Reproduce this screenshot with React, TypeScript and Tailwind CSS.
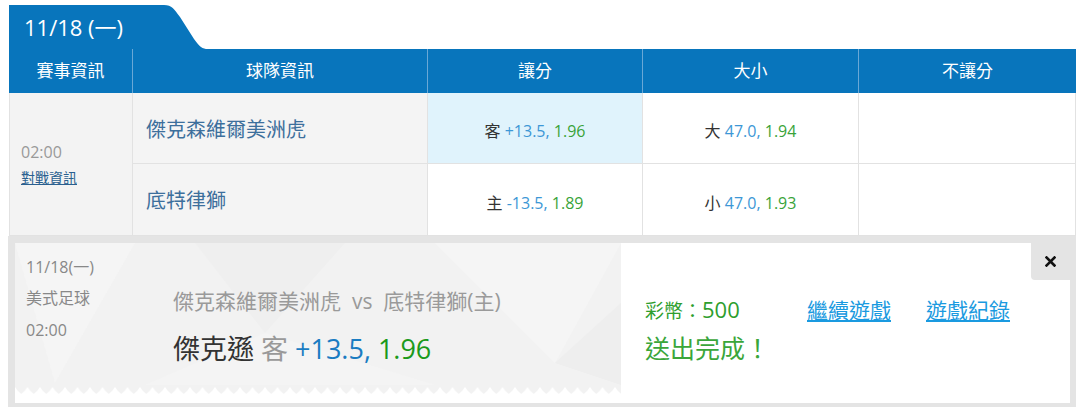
import React from 'react';

const FONT = { fontFamily: '"Open Sans", "Noto Sans CJK TC", sans-serif' };

const Odds = ({ tag, line, price }: { tag: string; line: string; price: string }) => (
  <span className="text-[16px] text-[#333]">
    {tag} <span className="text-[#3d97d6]">{line},</span> <span className="text-[#39a339]">{price}</span>
  </span>
);

export default function App() {
  return (
    <div className="w-[1080px] h-[407px] bg-white overflow-hidden" style={FONT}>
      <div className="ml-[9px] w-[1067px] pt-[5px]">
        {/* Date tab */}
        <div className="flex items-end h-[44px]">
          <div className="w-[150px] h-full bg-[#0875bc] flex items-center pl-[15px] text-white text-[22px]">
            11/18 (一)
          </div>
          <svg width="50" height="44" viewBox="0 0 50 44" className="block -ml-px">
            <path d="M0 0 H6 C14 0 16 4 22 12 L36 34 C42 42 44 44 50 44 H0 Z" fill="#0875bc" />
          </svg>
        </div>

        {/* Table header */}
        <div className="grid grid-cols-[124px_295px_215px_216px_1fr] h-[44px] bg-[#0875bc] text-white text-[17px]">
          <div className="flex items-center justify-center border-r border-[#6aa8d6]">賽事資訊</div>
          <div className="flex items-center justify-center border-r border-[#6aa8d6]">球隊資訊</div>
          <div className="flex items-center justify-center border-r border-[#6aa8d6]">讓分</div>
          <div className="flex items-center justify-center border-r border-[#6aa8d6]">大小</div>
          <div className="flex items-center justify-center">不讓分</div>
        </div>

        {/* Table body */}
        <div className="grid grid-cols-[124px_295px_215px_216px_1fr] grid-rows-[71px_71px] border-b border-[#e2e2e2]">
          <div className="row-span-2 bg-[#f3f3f3] border-l border-r border-[#e2e2e2] flex flex-col justify-center pl-[11px] pt-[2px]">
            <div className="text-[16px] text-[#999] leading-[20px]">02:00</div>
            <a className="text-[14px] text-[#2a5f8f] underline leading-[20px] mt-[6px]">對戰資訊</a>
          </div>
          <div className="bg-[#f4f4f4] border-r border-b border-[#e2e2e2] flex items-center pl-[13px] pt-[3px] text-[20px] text-[#3d6f9c]">
            傑克森維爾美洲虎
          </div>
          <div className="bg-[#e0f3fc] border-r border-b border-[#e2e2e2] flex items-center justify-center pt-[5px]">
            <Odds tag="客" line="+13.5" price="1.96" />
          </div>
          <div className="bg-white border-r border-b border-[#e2e2e2] flex items-center justify-center pt-[5px]">
            <Odds tag="大" line="47.0" price="1.94" />
          </div>
          <div className="bg-white border-r border-b border-[#e2e2e2]" />
          <div className="bg-[#f4f4f4] border-r border-[#e2e2e2] flex items-center pl-[13px] pt-[2px] text-[20px] text-[#3d6f9c]">
            底特律獅
          </div>
          <div className="bg-white border-r border-[#e2e2e2] flex items-center justify-center pt-[7px]">
            <Odds tag="主" line="-13.5" price="1.89" />
          </div>
          <div className="bg-white border-r border-[#e2e2e2] flex items-center justify-center pt-[7px]">
            <Odds tag="小" line="47.0" price="1.93" />
          </div>
          <div className="bg-white border-r border-[#e2e2e2]" />
        </div>

        {/* Confirmation panel */}
        <div className="-ml-px bg-[#e4e4e4] p-[7px] pr-[6px] pb-[5px]">
          <div className="relative flex bg-white h-[160px]">
            <div className="relative w-[606px] overflow-hidden">
              <svg className="absolute inset-0" width="606" height="160" viewBox="0 0 606 160">
                <defs>
                  <pattern id="wave" x="0" y="0" width="12.5" height="160" patternUnits="userSpaceOnUse">
                    <path d="M0 0 H12.5 V144 Q9.5 149 6.25 151 Q3 149 0 144 Z" fill="#f2f2f2" />
                  </pattern>
                </defs>
                <rect x="0" y="0" width="606" height="160" fill="url(#wave)" />
                <polygon points="0,0 120,0 40,140" fill="#f5f5f5" />
                <polygon points="180,0 330,0 250,90" fill="#efefef" />
                <polygon points="250,90 420,142 130,142" fill="#f4f4f4" />
                <polygon points="420,0 606,0 540,120" fill="#f5f5f5" />
                <polygon points="540,120 606,60 606,142" fill="#eeeeee" />
              </svg>
              <div className="relative flex pl-[11px] pt-[14px]">
                <div className="w-[147px] text-[16px] text-[#888] leading-[20px]">
                  <div>11/18(一)</div>
                  <div className="mt-[11px]">美式足球</div>
                  <div className="mt-[12px]">02:00</div>
                </div>
                <div className="pt-[31px]">
                  <div className="text-[21px] text-[#9a9a9a] leading-[26px]">
                    傑克森維爾美洲虎&nbsp; vs&nbsp; 底特律獅(主)
                  </div>
                  <div className="mt-[18px] text-[27px] leading-[34px] text-[#333]">
                    傑克遜 <span className="text-[#999]">客</span>{' '}
                    <span className="text-[#1a7cc2]">+13.5,</span> <span className="text-[#1b9a1b]">1.96</span>
                  </div>
                </div>
              </div>
            </div>
            <div className="flex-1 pl-[24px] pt-[51px]">
              <div className="flex items-center text-[21px] leading-[30px]">
                <span className="w-[162px] text-[#2e9e2e]">
                  <span className="text-[19px]">彩幣：</span>
                  <span className="text-[22px]">500</span>
                </span>
                <a className="text-[#1a9ae0] underline">繼續遊戲</a>
                <a className="ml-[35px] text-[#1a9ae0] underline">遊戲紀錄</a>
              </div>
              <div className="mt-[5px] text-[25px] leading-[34px] text-[#3aa63a]">送出完成！</div>
            </div>
            <div className="absolute top-0 right-0 w-[39px] h-[37px] bg-[#e4e4e4] rounded-bl-[4px] flex items-center justify-center">
              <svg width="11" height="11" viewBox="0 0 11 11">
                <path d="M1.5 1.5 L9.5 9.5 M9.5 1.5 L1.5 9.5" stroke="#111" strokeWidth="2.6" strokeLinecap="square" />
              </svg>
            </div>
          </div>
        </div>
      </div>
    </div>
  );
}
